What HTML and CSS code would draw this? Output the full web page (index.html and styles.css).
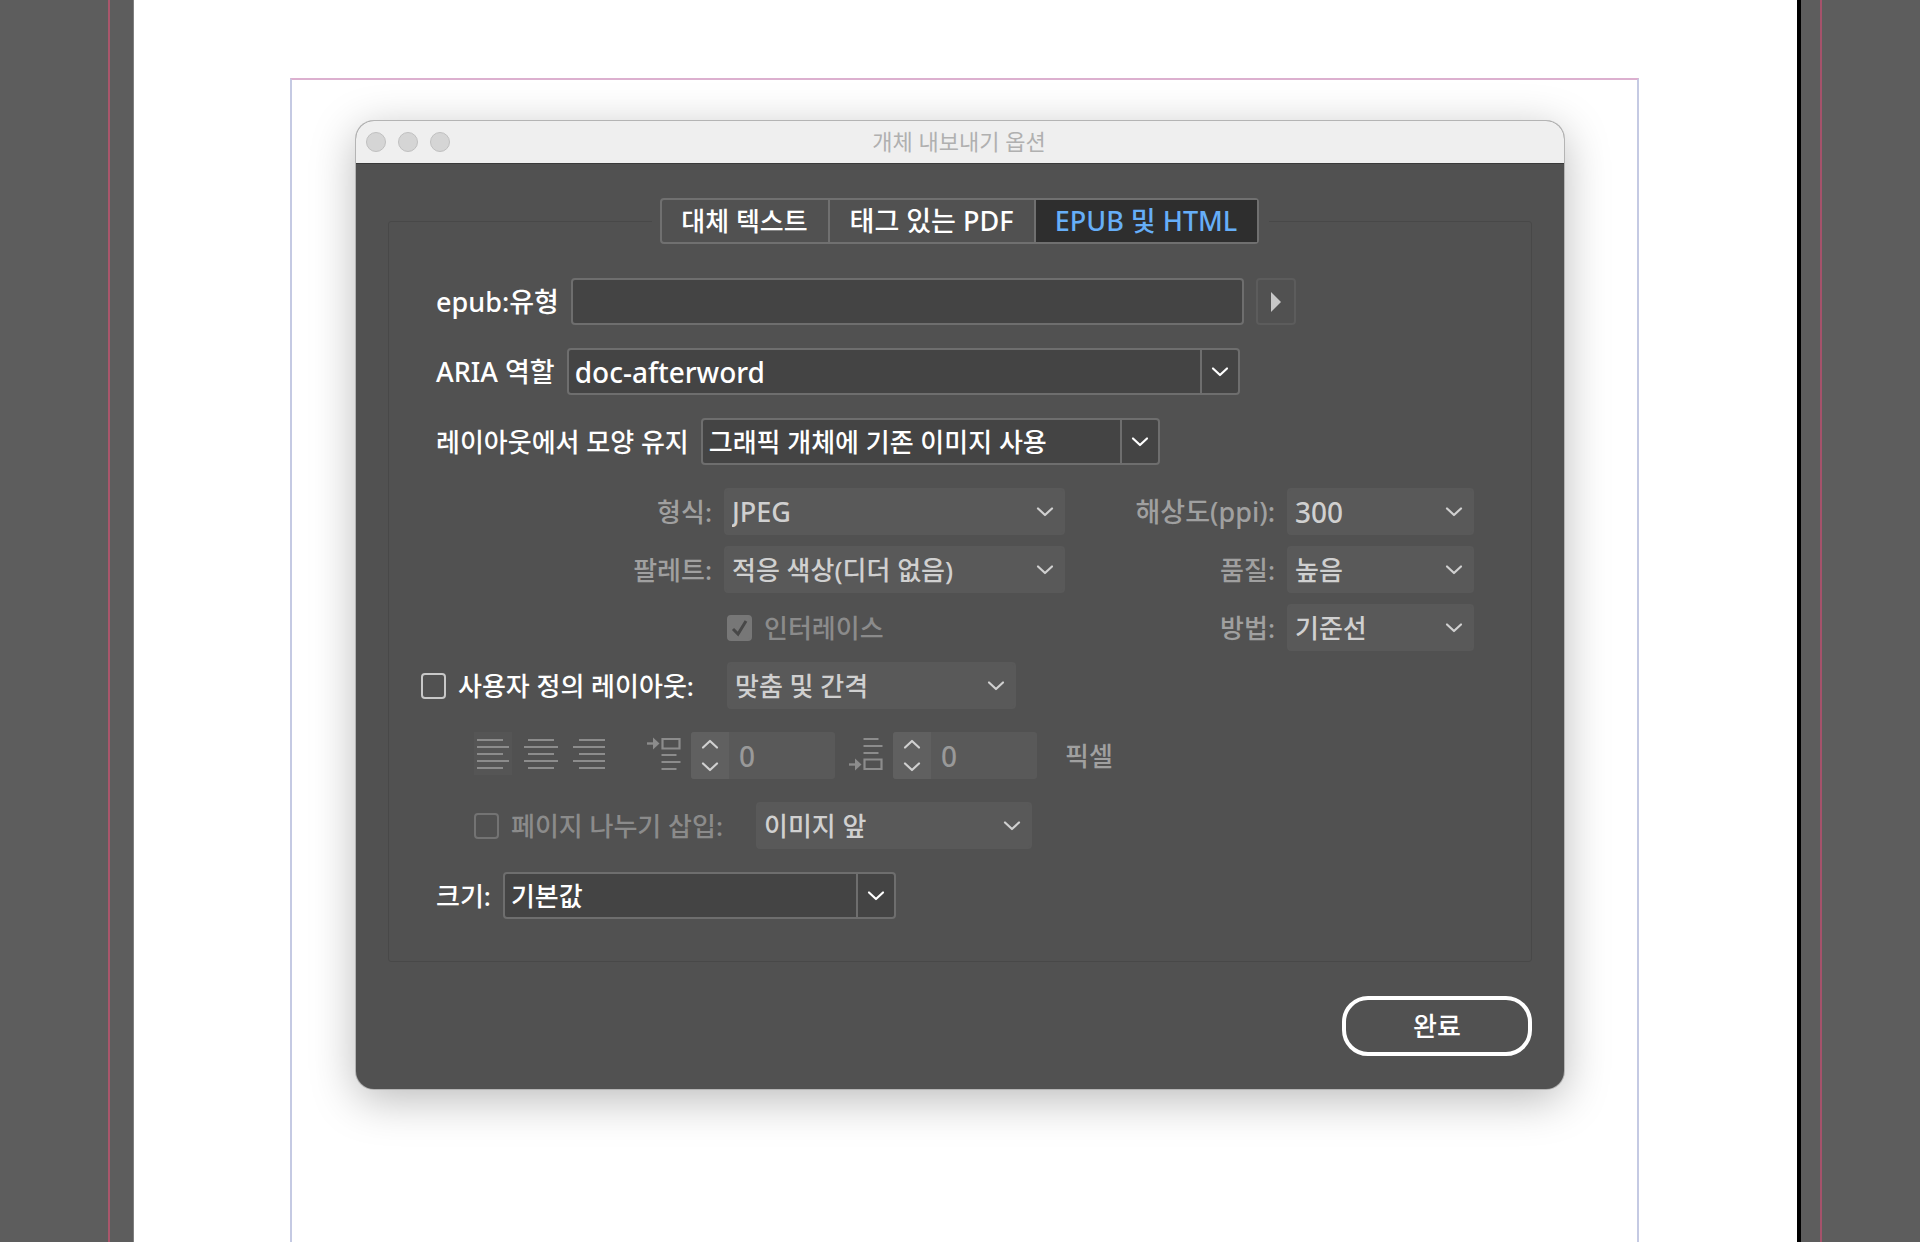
FILE: index.html
```html
<!DOCTYPE html>
<html lang="ko">
<head>
<meta charset="utf-8">
<meta name="viewport" content="width=device-width, initial-scale=1">
<title>개체 내보내기 옵션</title>
<link rel="stylesheet" href="styles.css">
</head>
<body>
<svg class="symbols" aria-hidden="true">
  <symbol id="chevron" viewBox="0 0 18 12"><path d="M2 2.5l7 6.5 7-6.5" fill="none" stroke="currentColor" stroke-width="2.2" stroke-linecap="round" stroke-linejoin="round"/></symbol>
  <symbol id="space-before" viewBox="0 0 36 34">
    <path d="M1 6.500h7" stroke="currentColor" stroke-width="2.400"/><path d="M7 0.500l6.500 6-6.500 6z" fill="currentColor"/>
    <path d="M16.500 2h17v9.500h-17zM15.500 18h15M15.500 25h19M15.500 32h15" fill="none" stroke="currentColor" stroke-width="2.200"/>
  </symbol>
  <symbol id="space-after" viewBox="0 0 36 34">
    <path d="M1 27.500h7" stroke="currentColor" stroke-width="2.400"/><path d="M7 21.500l6.500 6-6.500 6z" fill="currentColor"/>
    <path d="M16.500 22.500h17v9.500h-17zM15.500 2h15M15.500 9h19M15.500 16h15" fill="none" stroke="currentColor" stroke-width="2.200"/>
  </symbol>
</svg>
<div class="pasteboard">
  <div class="outer outer--left"></div>
  <div class="slug slug--left"></div>
  <div class="page">
    <div class="margins">
      <main class="dialog" role="dialog" aria-labelledby="dialog-title">
        <header class="titlebar">
          <div class="lights">
            <button class="light" type="button" aria-label="닫기"></button>
            <button class="light" type="button" aria-label="최소화"></button>
            <button class="light" type="button" aria-label="확대"></button>
          </div>
          <h1 class="title" id="dialog-title">개체 내보내기 옵션</h1>
        </header>
        <form class="content">
          <fieldset class="group">
            <legend class="legend">
              <span class="tabs" role="tablist">
                <button class="tab" type="button" role="tab" aria-selected="false">대체 텍스트</button>
                <button class="tab tab--wide mixed" type="button" role="tab" aria-selected="false">태그 있는 PDF</button>
                <button class="tab tab--active mixed" type="button" role="tab" aria-selected="true">EPUB 및 HTML</button>
              </span>
            </legend>

            <div class="row row--field">
              <label class="mixed" for="epub-type">epub:유형</label>
              <input class="field field--long" id="epub-type" type="text">
              <button class="more" type="button" aria-label="유형 목록"><svg width="12" height="20" viewBox="0 0 12 20" aria-hidden="true"><path d="M1 0l10 10L1 20z" fill="#c8c8c8"/></svg></button>
            </div>
            <div class="row row--field">
              <label class="mixed" for="aria-role">ARIA 역할</label>
              <span class="select field--long"><select class="latin" id="aria-role"><option>doc-afterword</option></select><span class="arrow"><svg class="chevron"><use href="#chevron"/></svg></span></span>
            </div>
            <div class="row row--field">
              <label for="appearance">레이아웃에서 모양 유지</label>
              <span class="select select--appearance"><select id="appearance"><option>그래픽 개체에 기존 이미지 사용</option></select><span class="arrow"><svg class="chevron"><use href="#chevron"/></svg></span></span>
            </div>

            <div class="image-options">
              <label class="dim" for="format">형식:</label>
              <span class="select select--off"><select class="mixed" id="format" disabled><option>JPEG</option></select><span class="arrow"><svg class="chevron"><use href="#chevron"/></svg></span></span>
              <label class="dim mixed" for="ppi">해상도(ppi):</label>
              <span class="select select--off"><select class="latin" id="ppi" disabled><option>300</option></select><span class="arrow"><svg class="chevron"><use href="#chevron"/></svg></span></span>
              <label class="dim" for="palette">팔레트:</label>
              <span class="select select--off"><select id="palette" disabled><option>적응 색상(디더 없음)</option></select><span class="arrow"><svg class="chevron"><use href="#chevron"/></svg></span></span>
              <label class="dim" for="quality">품질:</label>
              <span class="select select--off"><select id="quality" disabled><option>높음</option></select><span class="arrow"><svg class="chevron"><use href="#chevron"/></svg></span></span>
              <span class="interlace"><input class="check" id="interlace" type="checkbox" checked disabled><label class="faint" for="interlace">인터레이스</label></span>
              <label class="dim" for="method">방법:</label>
              <span class="select select--off"><select id="method" disabled><option>기준선</option></select><span class="arrow"><svg class="chevron"><use href="#chevron"/></svg></span></span>
            </div>

            <div class="row row--custom">
              <span class="check-label check-label--custom"><input class="check" id="custom" type="checkbox"><label for="custom">사용자 정의 레이아웃:</label></span>
              <span class="select select--off select--layout"><select id="layout" aria-label="사용자 정의 레이아웃" disabled><option>맞춤 및 간격</option></select><span class="arrow"><svg class="chevron"><use href="#chevron"/></svg></span></span>
            </div>

            <div class="row row--nested">
              <div class="aligns">
                <button class="align align--on" type="button" aria-label="왼쪽 정렬" disabled><svg width="34" height="32" viewBox="0 0 34 32"><path d="M1 2h26M1 9h32M1 16h26M1 23h32M1 30h26" stroke="currentColor" stroke-width="2.200"/></svg></button>
                <button class="align" type="button" aria-label="가운데 정렬" disabled><svg width="34" height="32" viewBox="0 0 34 32"><path d="M4 2h26M0 9h34M4 16h26M0 23h34M4 30h26" stroke="currentColor" stroke-width="2.200"/></svg></button>
                <button class="align" type="button" aria-label="오른쪽 정렬" disabled><svg width="34" height="32" viewBox="0 0 34 32"><path d="M7 2h26M1 9h32M7 16h26M1 23h32M7 30h26" stroke="currentColor" stroke-width="2.200"/></svg></button>
              </div>
              <div class="spacing">
                <label class="spacing-icon" for="before" aria-label="앞 공백"><svg width="36" height="34"><use href="#space-before"/></svg></label>
                <span class="spinner"><span class="steps"><svg class="chevron chevron--up"><use href="#chevron"/></svg><svg class="chevron"><use href="#chevron"/></svg></span><input class="latin" id="before" type="text" value="0" disabled></span>
              </div>
              <div class="spacing">
                <label class="spacing-icon" for="after" aria-label="뒤 공백"><svg width="36" height="34"><use href="#space-after"/></svg></label>
                <span class="spinner"><span class="steps"><svg class="chevron chevron--up"><use href="#chevron"/></svg><svg class="chevron"><use href="#chevron"/></svg></span><input class="latin" id="after" type="text" value="0" disabled></span>
              </div>
              <span class="unit dim">픽셀</span>
            </div>

            <div class="row row--nested">
              <span class="check-label check-label--break"><input class="check check--off" id="break" type="checkbox" disabled><label class="faint" for="break">페이지 나누기 삽입:</label></span>
              <span class="select select--off select--break"><select id="break-at" aria-label="페이지 나누기 위치" disabled><option>이미지 앞</option></select><span class="arrow"><svg class="chevron"><use href="#chevron"/></svg></span></span>
            </div>

            <div class="row row--field">
              <label for="size">크기:</label>
              <span class="select select--size"><select id="size"><option>기본값</option></select><span class="arrow"><svg class="chevron"><use href="#chevron"/></svg></span></span>
            </div>
          </fieldset>
          <div class="footer"><button class="done" type="button">완료</button></div>
        </form>
      </main>
    </div>
  </div>
  <div class="slug slug--right"></div>
  <div class="outer outer--right"></div>
</div>
</body>
</html>
```
FILE: styles.css
```css
* { box-sizing: border-box; }

body {
  margin: 0;
  background: #5d5d5d;
  color: #fff;
  font-family: "Noto Sans", "Noto Sans CJK KR", sans-serif;
  font-size: 26px;
  font-weight: 500;
  line-height: 36px;
}

button, input, select { font: inherit; color: inherit; margin: 0; }
button { padding: 0; border: 0; background: none; }
label { white-space: nowrap; }
svg { display: block; }
.symbols { display: none; }

/* Document window behind the dialog */
.pasteboard { display: flex; min-height: 100vh; }
.outer--left { width: 110px; border-right: 2px solid #a9566b; }
.outer--right { width: 100px; border-left: 2px solid #a5526b; }
.slug--left { width: 24px; border-right: 1px solid #808080; }
.slug--right { width: 19px; }
.page {
  flex: 1;
  display: flex;
  padding: 78px 158px 0 156px;
  background: #fff;
  border-right: 4px solid #000;
}
.margins {
  flex: 1;
  padding: 41px 73px 40px 64px;
  border: 2px solid #c5cae3;
  border-top-color: #dcb0cf;
  border-bottom: 0;
}

/* Dialog window */
.dialog {
  border-radius: 18px;
  background: #515151;
  box-shadow: 0 0 0 1px #b4b4b4, 0 10px 46px rgba(0, 0, 0, .28);
}
.titlebar {
  display: grid;
  grid-template-columns: 1fr auto 1fr;
  align-items: center;
  height: 43px;
  padding: 0 12px 0 10px;
  border-radius: 18px 18px 0 0;
  border-bottom: 1px solid #3a3a3a;
  background: #efefef;
}
.lights { display: flex; gap: 12px; }
.light {
  width: 20px;
  height: 20px;
  border: 1px solid #c0c0c0;
  border-radius: 50%;
  background: #d5d5d5;
}
.title {
  margin: 0;
  padding-bottom: 2px;
  color: #b0b0b0;
  font-size: 22px;
  font-weight: 400;
}
.content { padding: 34px 32px 33px; }

.group {
  min-width: 0;
  margin: 0;
  padding: 34px 32px 42px;
  border: 1px solid #484848;
  border-radius: 3px;
}
.legend { margin: 0 auto; padding: 0 10px 0 8px; }
.tabs {
  display: flex;
  height: 46px;
  border: 2px solid #707070;
  border-radius: 4px;
}
.tab { width: 166px; line-height: 42px; }
.tab + .tab { border-left: 2px solid #707070; }
.tab--wide { width: 206px; }
.tab--active { width: 223px; background: #2e2e2e; color: #66aef8; }

/* Form rows */
.row { display: flex; align-items: center; height: 47px; margin-bottom: 23px; }
.row:last-child { margin-bottom: 0; }
.row--field { gap: 12px; padding-left: 15px; }
.row--nested { padding-left: 53px; }
.dim { color: #a0a0a0; }
.faint { color: #8b8b8b; }
.mixed { font-size: 27px; }
.latin { font-size: 28px; }

.field {
  height: 47px;
  padding: 0 6px;
  border: 2px solid #6e6e6e;
  border-radius: 4px;
  background: #444;
}
.field--long { width: 673px; }
.more {
  display: grid;
  place-items: center;
  width: 40px;
  height: 47px;
  border: 2px solid #5c5c5c;
  border-radius: 4px;
}

.select { display: grid; height: 47px; }
.select select {
  grid-area: 1 / 1;
  width: 100%;
  height: 47px;
  padding: 0 40px 0 6px;
  border: 2px solid #6e6e6e;
  border-radius: 4px;
  background: #444;
  appearance: none;
}
.arrow {
  grid-area: 1 / 1;
  justify-self: end;
  display: grid;
  place-items: center;
  width: 40px;
  padding-right: 2px;
  border-left: 2px solid #6e6e6e;
  margin: 2px 0;
  pointer-events: none;
}
.chevron { width: 18px; height: 12px; }
.chevron--up { transform: rotate(180deg); }
.select--off { color: #d0d0d0; }
.select--off select { border-color: #595959; background: #595959; opacity: 1; }
.select--off .arrow { border-color: transparent; }
.select--appearance { width: 459px; }
.select--layout { width: 289px; }
.select--break { width: 276px; }
.select--size { width: 393px; }

.image-options {
  display: grid;
  grid-template-columns: 291px 341px 198px 187px;
  gap: 11px 12px;
  align-items: center;
  justify-items: end;
  margin-bottom: 11px;
}
.image-options .select { width: 100%; }
.interlace { grid-column: 2; justify-self: start; padding-left: 3px; }

.check {
  flex: none;
  width: 25px;
  height: 26px;
  border: 2px solid #c8c8c8;
  border-radius: 4px;
  appearance: none;
}
.check--off { border-color: #737373; }
.check:checked {
  border-color: #777;
  background: #777 url("data:image/svg+xml,%3Csvg xmlns='http://www.w3.org/2000/svg' viewBox='0 0 21 22'%3E%3Cpath d='M4 12l5 5 8-13' fill='none' stroke='%23484848' stroke-width='3'/%3E%3C/svg%3E") center / 100% no-repeat;
}
.check-label, .interlace { display: flex; align-items: center; gap: 12px; }
.check-label--custom { width: 306px; }
.check-label--break { width: 282px; }

.aligns { display: flex; gap: 10px; margin: 0 38px 4px 0; }
.align {
  display: grid;
  place-items: center;
  width: 38px;
  height: 43px;
  color: #8c8c8c;
}
.align--on { background: #555; }
.spacing { display: flex; align-items: center; gap: 9px; margin-right: 13px; }
.spacing-icon { margin-bottom: 4px; color: #8c8c8c; }
.spinner { display: flex; width: 144px; height: 47px; background: #595959; border-radius: 3px; }
.spinner input {
  min-width: 0;
  flex: 1;
  padding: 0 10px;
  border: 0;
  background: none;
  color: #999;
}
.steps {
  display: flex;
  flex-direction: column;
  align-items: center;
  justify-content: space-between;
  width: 38px;
  padding: 6px 0;
  border-radius: 3px 0 0 3px;
  background: #606060;
  color: #d0d0d0;
}
.unit { margin-left: 15px; }

.footer { display: flex; justify-content: flex-end; margin-top: 34px; }
.done {
  width: 190px;
  height: 60px;
  border: 4px solid #fff;
  border-radius: 26px;
}
```
